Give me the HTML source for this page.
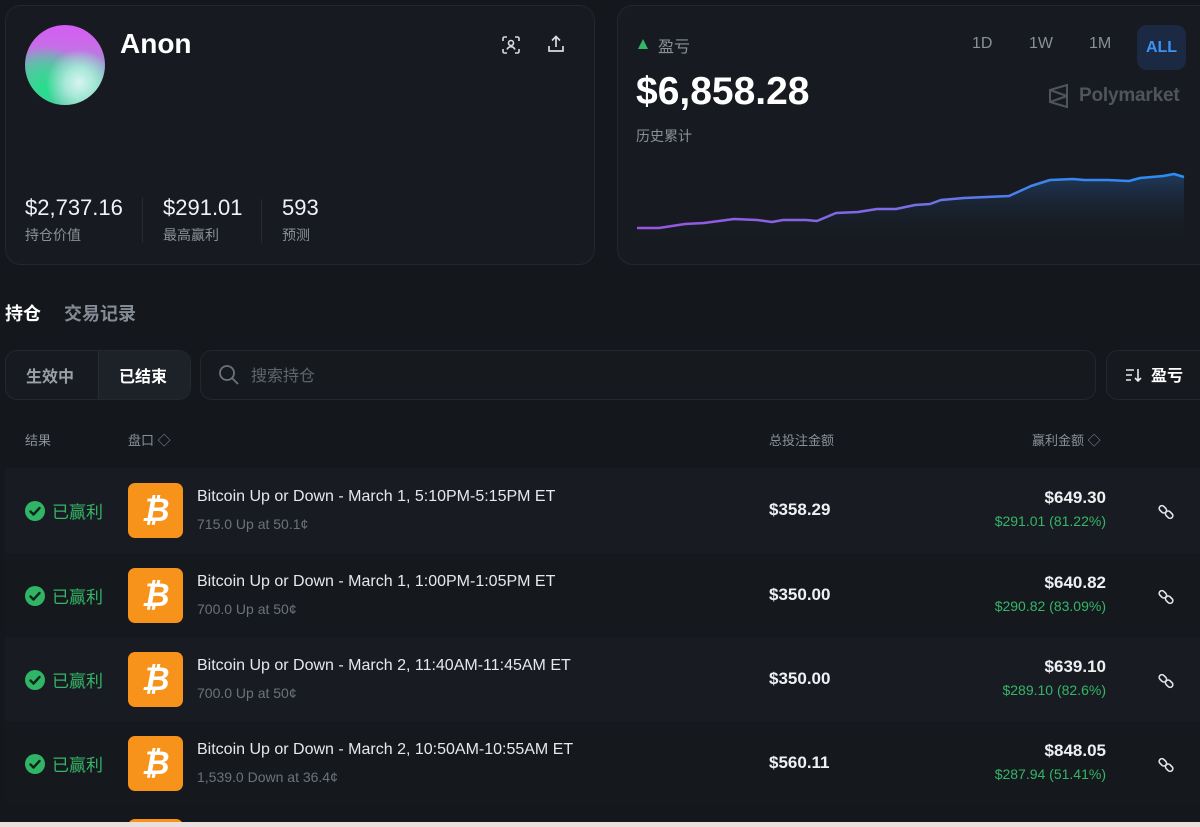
<!DOCTYPE html>
<html><head><meta charset="utf-8"><style>
*{box-sizing:border-box;margin:0;padding:0}
body{width:1200px;height:827px;overflow:hidden;background:#14171c;font-family:"Liberation Sans","Noto Sans CJK SC",sans-serif;color:#e8eaed;position:relative}
.abs{position:absolute}
.card{position:absolute;background:#171b21;border:1px solid #23272e;border-radius:16px}
.gray{color:#8a9099}
.row{position:absolute;left:5px;width:1200px;height:85px}
.btc{position:absolute;left:123px;top:15px;width:55px;height:55px;border-radius:7px;background:#f7931a;color:#fff;font-weight:bold;font-size:32px;font-style:italic;text-align:center;line-height:55px}
.ok{position:absolute;left:20px;top:33px;width:20px;height:20px;border-radius:50%;background:#2fb565}
.okt{position:absolute;left:47px;top:30px;font-size:17px;color:#35b566}
.t1{position:absolute;left:192px;top:20px;font-size:16px;color:#e6e8eb}
.t2{position:absolute;left:192px;top:48px;font-size:14px;color:#6c727b}
.amt{position:absolute;left:764px;top:32px;font-size:17px;font-weight:bold;color:#eef0f2}
.v1{position:absolute;right:99px;top:20px;font-size:17px;font-weight:bold;color:#eef0f2;text-align:right}
.v2{position:absolute;right:99px;top:45px;font-size:14px;color:#35b566;text-align:right}
.lnk{position:absolute;left:1152px;top:35px}
</style></head><body>

<div class="card" style="left:5px;top:5px;width:590px;height:260px"></div>
<div class="abs" style="left:25px;top:25px;width:80px;height:80px;border-radius:50%;background:radial-gradient(circle at 68% 72%,#d8f5f0 0,#a8e8d8 18%,transparent 42%),radial-gradient(circle at 25% 80%,#22e08a 0,#4fc9a0 25%,transparent 50%),linear-gradient(180deg,#d55cf5 0%,#c66fe6 30%,#8fa1c9 55%,#6fd4b0 80%)"></div>
<div class="abs" style="left:120px;top:28px;font-size:28px;font-weight:bold;color:#fff">Anon</div>
<svg class="abs" style="left:501px;top:35px" width="20" height="20" viewBox="0 0 20 20" fill="none" stroke="#d8dbe0" stroke-width="1.6"><path d="M2 6V3.5A1.5 1.5 0 0 1 3.5 2H6M14 2h2.5A1.5 1.5 0 0 1 18 3.5V6M18 14v2.5a1.5 1.5 0 0 1-1.5 1.5H14M6 18H3.5A1.5 1.5 0 0 1 2 16.5V14"/><circle cx="10" cy="8" r="2.5"/><path d="M6 14.5c1-2 2.3-2.8 4-2.8s3 .8 4 2.8"/></svg>
<svg class="abs" style="left:546px;top:34px" width="20" height="20" viewBox="0 0 20 20" fill="none" stroke="#d8dbe0" stroke-width="1.7"><path d="M10 13V3M6 6.5 10 2.5l4 4M3 12v5h14v-5"/></svg>
<div class="abs" style="left:25px;top:195px;font-size:22px;color:#f1f2f4">$2,737.16</div>
<div class="abs gray" style="left:25px;top:225px;font-size:14px">持仓价值</div>
<div class="abs" style="left:142px;top:197px;width:1px;height:46px;background:#262a31"></div>
<div class="abs" style="left:163px;top:195px;font-size:22px;color:#f1f2f4">$291.01</div>
<div class="abs gray" style="left:163px;top:225px;font-size:14px">最高赢利</div>
<div class="abs" style="left:261px;top:199px;width:1px;height:44px;background:#262a31"></div>
<div class="abs" style="left:282px;top:195px;font-size:22px;color:#f1f2f4">593</div>
<div class="abs gray" style="left:282px;top:225px;font-size:14px">预测</div>

<div class="card" style="left:617px;top:5px;width:600px;height:260px"></div>
<div class="abs" style="left:638px;top:39px;width:0;height:0;border-left:5px solid transparent;border-right:5px solid transparent;border-bottom:10px solid #35b566"></div>
<div class="abs gray" style="left:658px;top:33px;font-size:16px">盈亏</div>
<div class="abs gray" style="left:972px;top:35px;font-size:16px">1D</div>
<div class="abs gray" style="left:1029px;top:35px;font-size:16px">1W</div>
<div class="abs gray" style="left:1089px;top:35px;font-size:16px">1M</div>
<div class="abs" style="left:1137px;top:25px;width:49px;height:45px;border-radius:10px;background:#1b2a42;color:#3d93f2;font-size:16px;font-weight:bold;text-align:center;line-height:45px">ALL</div>
<div class="abs" style="left:636px;top:70px;font-size:39px;font-weight:bold;color:#fff">$6,858.28</div>
<div class="abs gray" style="left:636px;top:126px;font-size:14px">历史累计</div>
<svg class="abs" style="left:1048px;top:83px" width="22" height="26" viewBox="0 0 22 26" fill="none" stroke="#50555d" stroke-width="2"><path d="M19 2 2 7v12l17 5zM2 7l17 6M2 19l17-6"/></svg>
<div class="abs" style="left:1079px;top:85px;font-size:19px;color:#50555d;font-weight:bold;letter-spacing:-0.2px">Polymarket</div>
<svg class="abs" style="left:0;top:0" width="1200" height="270">
<defs><linearGradient id="lg" x1="0" x2="1"><stop offset="0" stop-color="#9a55e0"/><stop offset=".5" stop-color="#7a6ee6"/><stop offset=".75" stop-color="#3a86ee"/><stop offset="1" stop-color="#2b8df5"/></linearGradient>
<linearGradient id="fg" x1="0" y1="0" x2="0" y2="1"><stop offset="0" stop-color="#2b5fa6" stop-opacity=".45"/><stop offset="1" stop-color="#171b21" stop-opacity="0"/></linearGradient></defs>
<path d="M637 228L659 228 685 224 704 223 734 219 757 220 772 222 783 220 806 220 817 221 836 213 858 212 877 209 896 209 915 205 930 204 941 200 964 198 986 197 1009 196 1031 186 1050 180 1073 179 1084 180 1107 180 1129 181 1140 178 1163 176 1174 174 1184 177L1184 240 637 240Z" fill="url(#fg)"/>
<path d="M637 228L659 228 685 224 704 223 734 219 757 220 772 222 783 220 806 220 817 221 836 213 858 212 877 209 896 209 915 205 930 204 941 200 964 198 986 197 1009 196 1031 186 1050 180 1073 179 1084 180 1107 180 1129 181 1140 178 1163 176 1174 174 1184 177" fill="none" stroke="url(#lg)" stroke-width="2.5" stroke-linejoin="round"/>
</svg>

<div class="abs" style="left:5px;top:300px;font-size:18px;font-weight:bold;color:#fff">持仓</div>
<div class="abs" style="left:64px;top:300px;font-size:18px;font-weight:bold;color:#858b94">交易记录</div>

<div class="abs" style="left:5px;top:350px;width:186px;height:50px;border:1px solid #23272e;border-radius:12px;background:#171b21;overflow:hidden">
<div class="abs" style="left:92px;top:0;width:94px;height:50px;background:#1d2229;border-left:1px solid #262a31"></div>
<div class="abs" style="left:20px;top:12px;font-size:16px;font-weight:bold;color:#9aa0a8">生效中</div>
<div class="abs" style="left:113px;top:12px;font-size:16px;font-weight:bold;color:#fff">已结束</div>
</div>
<div class="abs" style="left:200px;top:350px;width:896px;height:50px;border:1px solid #23272e;border-radius:12px;background:#161a1f"></div>
<svg class="abs" style="left:218px;top:364px" width="22" height="22" viewBox="0 0 22 22" fill="none" stroke="#6c727b" stroke-width="1.8"><circle cx="9" cy="9" r="7"/><path d="M14 14l6 6"/></svg>
<div class="abs" style="left:251px;top:362px;font-size:16px;color:#5f656e">搜索持仓</div>
<div class="abs" style="left:1106px;top:350px;width:110px;height:50px;border:1px solid #23272e;border-radius:12px;background:#161a1f"></div>
<svg class="abs" style="left:1125px;top:366px" width="18" height="18" viewBox="0 0 18 18" fill="none" stroke="#e8eaed" stroke-width="1.6"><path d="M1 4h8M1 9h6M1 14h5M13 3v12M10 12l3 3 3-3"/></svg>
<div class="abs" style="left:1151px;top:362px;font-size:16px;font-weight:bold;color:#fff">盈亏</div>

<div class="abs gray" style="left:25px;top:430px;font-size:13px">结果</div>
<div class="abs gray" style="left:128px;top:430px;font-size:13px">盘口 ◇</div>
<div class="abs gray" style="left:769px;top:430px;font-size:13px">总投注金额</div>
<div class="abs gray" style="left:1032px;top:430px;font-size:13px">赢利金额 ◇</div>

<svg width="0" height="0" style="position:absolute"><defs>
<symbol id="chk" viewBox="0 0 20 20"><path d="M5.5 10.5l3 3 6-6.5" fill="none" stroke="#10241a" stroke-width="2.4" stroke-linecap="round" stroke-linejoin="round"/></symbol>
<symbol id="ln" viewBox="0 0 20 20"><g fill="none" stroke="#e0e3e7" stroke-width="1.8"><rect x="2" y="4" width="9" height="6" rx="3" transform="rotate(45 6.5 7)"/><rect x="9" y="10" width="9" height="6" rx="3" transform="rotate(45 13.5 13)"/></g></symbol>
</defs></svg>

<div class="row" style="top:468px;background:#181c22">
<div class="ok"><svg width="20" height="20"><use href="#chk"/></svg></div><div class="okt">已赢利</div>
<div class="btc">₿</div>
<div class="t1">Bitcoin Up or Down - March 1, 5:10PM-5:15PM ET</div>
<div class="t2">715.0 Up at 50.1¢</div>
<div class="amt">$358.29</div>
<div class="v1">$649.30</div><div class="v2">$291.01 (81.22%)</div>
<svg class="lnk" width="18" height="18"><use href="#ln"/></svg>
</div>
<div class="row" style="top:553px;background:#15191e">
<div class="ok"><svg width="20" height="20"><use href="#chk"/></svg></div><div class="okt">已赢利</div>
<div class="btc">₿</div>
<div class="t1">Bitcoin Up or Down - March 1, 1:00PM-1:05PM ET</div>
<div class="t2">700.0 Up at 50¢</div>
<div class="amt">$350.00</div>
<div class="v1">$640.82</div><div class="v2">$290.82 (83.09%)</div>
<svg class="lnk" width="18" height="18"><use href="#ln"/></svg>
</div>
<div class="row" style="top:637px;background:#181c22">
<div class="ok"><svg width="20" height="20"><use href="#chk"/></svg></div><div class="okt">已赢利</div>
<div class="btc">₿</div>
<div class="t1">Bitcoin Up or Down - March 2, 11:40AM-11:45AM ET</div>
<div class="t2">700.0 Up at 50¢</div>
<div class="amt">$350.00</div>
<div class="v1">$639.10</div><div class="v2">$289.10 (82.6%)</div>
<svg class="lnk" width="18" height="18"><use href="#ln"/></svg>
</div>
<div class="row" style="top:721px;background:#15191e">
<div class="ok"><svg width="20" height="20"><use href="#chk"/></svg></div><div class="okt">已赢利</div>
<div class="btc">₿</div>
<div class="t1">Bitcoin Up or Down - March 2, 10:50AM-10:55AM ET</div>
<div class="t2">1,539.0 Down at 36.4¢</div>
<div class="amt">$560.11</div>
<div class="v1">$848.05</div><div class="v2">$287.94 (51.41%)</div>
<svg class="lnk" width="18" height="18"><use href="#ln"/></svg>
</div>
<div class="abs" style="left:128px;top:819px;width:55px;height:8px;border-radius:7px 7px 0 0;background:#f7931a"></div>
<div class="abs" style="left:0;top:822px;width:1200px;height:5px;background:#e9dfdc"></div>
</body></html>
